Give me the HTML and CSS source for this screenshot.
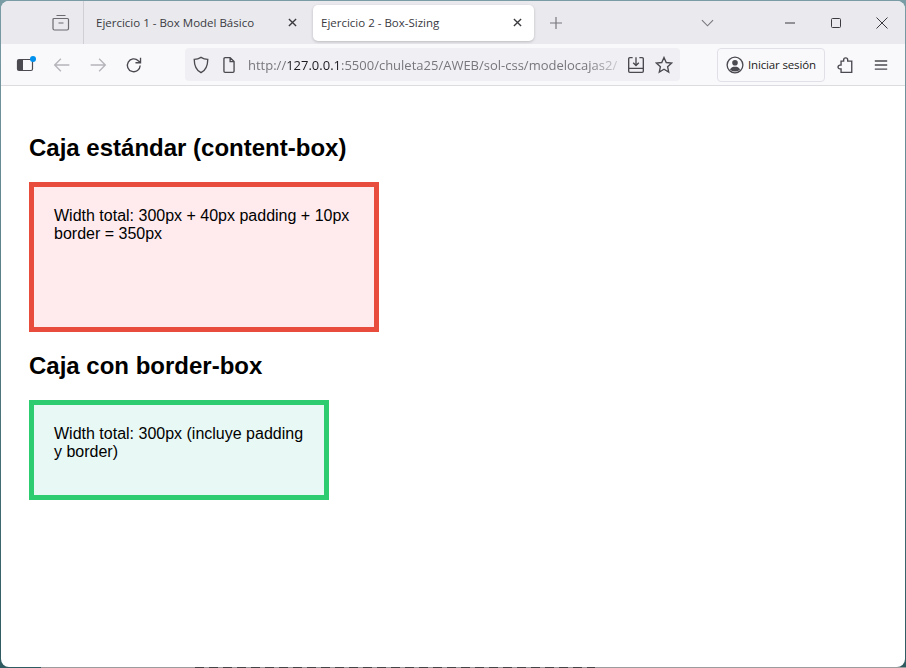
FILE: index.html
```html
<!DOCTYPE html>
<html lang="es">
<head>
<meta charset="UTF-8">
<meta name="viewport" content="width=device-width, initial-scale=1.0">
<title>Ejercicio 2 - Box-Sizing</title>
<link rel="stylesheet" href="styles.css">
</head>
<body>
<div class="window">
  <div class="tabbar">
    <div class="tab-group">
      <svg class="icon" viewBox="0 0 18 18"><path d="M4.500 1.500h9M2.500 4.500h13a1 1 0 0 1 1 1v9a1.500 1.500 0 0 1-1.500 1.500h-12.500a1.500 1.500 0 0 1-1.500-1.500v-9a1 1 0 0 1 1-1zM6.500 9h5"/></svg>
    </div>
    <div class="tab">
      <span class="tab-title">Ejercicio 1 - Box Model Básico</span>
      <svg class="tab-close" viewBox="0 0 10 10"><path d="M1 1l8 8M9 1l-8 8"/></svg>
    </div>
    <div class="tab tab-active">
      <span class="tab-title">Ejercicio 2 - Box-Sizing</span>
      <svg class="tab-close" viewBox="0 0 10 10"><path d="M1 1l8 8M9 1l-8 8"/></svg>
    </div>
    <svg class="new-tab" viewBox="0 0 12 12"><path d="M6 0v12M0 6h12"/></svg>
    <svg class="tab-list" viewBox="0 0 14 8"><path d="M1 1l6 6 6-6"/></svg>
    <div class="window-controls">
      <svg viewBox="0 0 12 12"><path d="M1 6h10"/></svg>
      <svg viewBox="0 0 12 12"><rect x="1.500" y="1.500" width="9" height="9" rx="1"/></svg>
      <svg viewBox="0 0 12 12"><path d="M.5 .5l11 11M11.500 .5l-11 11"/></svg>
    </div>
  </div>

  <div class="toolbar">
    <div class="sidebar-btn">
      <svg class="icon icon-dark" viewBox="0 0 18 18"><rect x="1.500" y="3.500" width="15" height="11" rx="1.500"/><path class="fill" d="M2 4h5v10h-5z"/></svg>
      <span class="dot"></span>
    </div>
    <svg class="icon icon-off" viewBox="0 0 16 16"><path d="M14.500 8h-13M7 2.500l-5.500 5.500 5.500 5.500"/></svg>
    <svg class="icon icon-off" viewBox="0 0 16 16"><path d="M1.500 8h13M9 2.500l5.500 5.500-5.500 5.500"/></svg>
    <svg class="icon icon-dark" viewBox="0 0 16 16"><path d="M13.500 8.500a5.700 5.700 0 1 1-1.700-4.300l1.700 1.500M13.800 1.500v4.500h-4.500"/></svg>

    <div class="urlbar">
      <svg class="icon icon-dark" viewBox="0 0 16 16"><path d="M8 1.200c2 1.300 4 1.800 6 1.800 0 5.500-1.500 9.500-6 11.800-4.500-2.300-6-6.300-6-11.800 2 0 4-.5 6-1.800z"/></svg>
      <svg class="icon icon-dark" viewBox="0 0 16 16"><path d="M3.500 2.500a1 1 0 0 1 1-1h4.500l3.500 3.500v8.500a1 1 0 0 1-1 1h-7a1 1 0 0 1-1-1zM9 1.500v3.500h3.500"/></svg>
      <div class="url">http://<b>127.0.0.1</b>:5500/chuleta25/AWEB/sol-css/modelocajas2/</div>
      <svg class="icon icon-dark" viewBox="0 0 16 16"><path d="M5 1.500h-2.500a1 1 0 0 0-1 1v11a1 1 0 0 0 1 1h11a1 1 0 0 0 1-1v-11a1 1 0 0 0-1-1h-2.500M8 1v7M5.500 6l2.500 2.500 2.500-2.500M1.500 11h13"/></svg>
      <svg class="icon icon-dark" viewBox="0 0 16 16"><path d="M8 1.300l2 4.500 4.800.5-3.600 3.200 1 4.800-4.200-2.500-4.200 2.500 1-4.800-3.600-3.200 4.800-.5z"/></svg>
    </div>

    <div class="signin">
      <svg class="icon icon-dark" viewBox="0 0 16 16"><circle cx="8" cy="8" r="7"/><circle class="fill" cx="8" cy="6" r="2.500"/><path class="fill" d="M3.500 12c1-2 2.500-2.500 4.500-2.500s3.500.5 4.500 2.500c-1 1-2.500 1.800-4.500 1.800s-3.500-.8-4.500-1.800z"/></svg>
      <span>Iniciar sesión</span>
    </div>
    <svg class="icon icon-dark" viewBox="0 0 16 16"><path d="M14 4.500v10h-9.500v-3h-1a1.700 1.700 0 0 1 0-3.400h1v-3.600h2.300v-1a1.800 1.800 0 0 1 3.600 0v1z"/></svg>
    <svg class="icon icon-dark" viewBox="0 0 16 16"><path d="M2.500 4.400h11M2.500 8h11M2.500 11.600h11"/></svg>
  </div>

  <main class="page">
    <h2>Caja estándar (content-box)</h2>
    <div class="box box-content">Width total: 300px + 40px padding + 10px border = 350px</div>
    <h2>Caja con border-box</h2>
    <div class="box box-border">Width total: 300px (incluye padding y border)</div>
  </main>
</div>
<div class="desktop-strip"><span class="strip-text"></span></div>
</body>
</html>
```

FILE: styles.css
```css
* {
  box-sizing: border-box;
}

html, body {
  height: 100%;
}

body {
  margin: 0;
  background: linear-gradient(#7a9ca5, #2f5a60);
  overflow: hidden;
  font-family: "Liberation Sans", Arial, sans-serif;
}

svg {
  display: block;
  flex: none;
  fill: none;
  stroke-width: 1.2;
}

.window {
  display: flex;
  flex-direction: column;
  height: 666px;
  margin: 1px 1px 0;
  background-color: #fff;
  border-radius: 8px;
  overflow: hidden;
}

/* what shows of the desktop under the window */
.desktop-strip {
  height: 1px;
  padding-left: 195px;
  background: linear-gradient(to right, #2f5a60 41px, #9c9c9c 41px);
}

.strip-text {
  display: block;
  width: 400px;
  height: 1px;
  background: repeating-linear-gradient(to right, #444 0, #444 9px, #9c9c9c 9px, #9c9c9c 14px);
}

/* tab strip */
.tabbar {
  display: flex;
  align-items: center;
  height: 43px;
  flex: none;
  background-color: #e9e9ee;
  font-family: "Open Sans", "Noto Sans", sans-serif;
  font-size: 11.500px;
  color: #3a3a3f;
}

.tab-group {
  display: flex;
  justify-content: center;
  align-items: center;
  width: 83px;
  height: 43px;
  padding-left: 38px;
  border-right: 1px solid #cfcfd5;
}

.icon {
  width: 18px;
  height: 18px;
  stroke: #6b6b70;
}

.icon-dark {
  stroke: #4a4a50;
}

.icon-off {
  stroke: #b4b4ba;
}

.fill {
  fill: #4a4a50;
  stroke: none;
}

.tab {
  display: flex;
  align-items: center;
  justify-content: space-between;
  width: 222px;
  height: 36px;
  padding: 0 9px 0 12px;
  margin-right: 7px;
  border-radius: 5px;
}

.tab-active {
  width: 221px;
  padding: 0 12px 0 8px;
  background-color: #fff;
  box-shadow: 0 1px 3px rgba(0, 0, 0, 0.2);
}

.tab-close {
  width: 9px;
  height: 9px;
  stroke: #3a3a3f;
  stroke-width: 1.500;
}

.new-tab {
  width: 12px;
  height: 12px;
  margin-left: 9px;
  stroke: #77777c;
}

.tab-list {
  width: 13px;
  height: 8px;
  margin-left: 139px;
  stroke: #77777c;
}

.window-controls {
  display: flex;
  align-items: center;
  gap: 34px;
  margin-left: auto;
  margin-right: 17px;
}

.window-controls svg {
  width: 12px;
  height: 12px;
  stroke: #3a3a3f;
  stroke-width: 1;
}

/* nav bar */
.toolbar {
  display: flex;
  align-items: center;
  gap: 18px;
  height: 42px;
  flex: none;
  padding: 0 15px;
  background-color: #f9f9fb;
  border-bottom: 1px solid #dcdce0;
}

.sidebar-btn {
  position: relative;
  margin-right: 1px;
}

.dot {
  position: absolute;
  top: 0;
  right: -2px;
  width: 6px;
  height: 6px;
  background-color: #0090ed;
  border-radius: 50%;
}

.urlbar {
  display: flex;
  align-items: center;
  gap: 10px;
  width: 495px;
  height: 33px;
  margin-left: 24px;
  padding: 0 7px;
  background-color: #f0f0f4;
  border-radius: 4px;
}

.url {
  flex: 1;
  overflow: hidden;
  white-space: nowrap;
  font-family: "Open Sans", "Noto Sans", sans-serif;
  font-size: 13px;
  color: #77777c;
  mask-image: linear-gradient(to right, #000 92%, rgba(0, 0, 0, 0.3));
}

.url b {
  font-weight: normal;
  color: #1c1b22;
}

.signin {
  display: flex;
  align-items: center;
  gap: 4px;
  width: 108px;
  height: 34px;
  margin-left: 19px;
  margin-right: -7px;
  padding: 0 8px;
  border: 1px solid #e0e0e6;
  border-radius: 4px;
  font-family: "Open Sans", "Noto Sans", sans-serif;
  font-size: 11.500px;
  letter-spacing: -0.15px;
  white-space: nowrap;
  color: #1c1b22;
}

/* page content */
.page {
  flex: 1;
  padding: 28px 28px;
  color: #000;
}

h2 {
  margin: 20px 0;
  font-size: 24px;
}

.box {
  padding: 20px;
  border: 5px solid;
  font-size: 16px;
  line-height: 18px;
}

.box-content {
  width: 350px;
  height: 150px;
  background-color: #ffebee;
  border-color: #e74c3c;
}

.box-border {
  width: 300px;
  height: 100px;
  background-color: #e8f8f5;
  border-color: #2ecc71;
}
```
